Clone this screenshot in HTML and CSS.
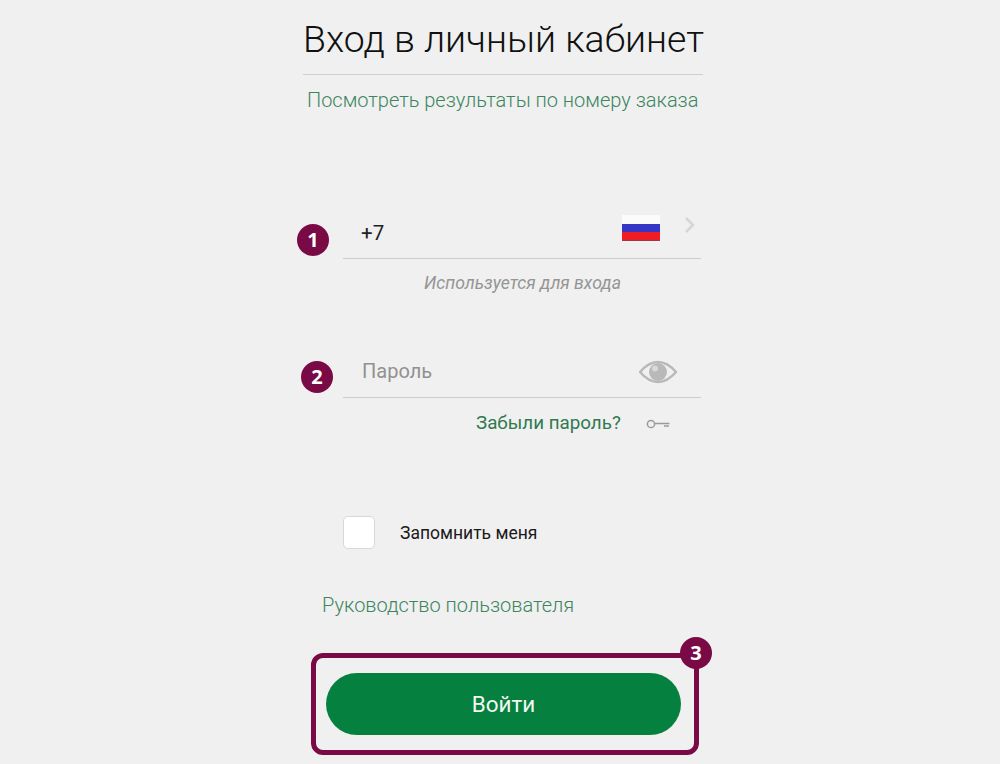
FILE: index.html
```html
<!DOCTYPE html>
<html lang="ru">
<head>
  <meta charset="UTF-8" />
  <title>Вход в личный кабинет</title>
  <link rel="stylesheet" href="styles.css">
</head>
<body>
  <div class="container">
    <h1 class="title">Вход в личный кабинет</h1>
    <a class="link order-link" href="#">Посмотреть результаты по номеру заказа</a>

    <div class="field phone-field">
      <span class="badge badge-one">1</span>
      <span class="value">+7</span>
      <svg class="flag" width="40" height="26" viewBox="0 0 40 26">
        <rect x="1" y="0" width="38" height="9" fill="#fbfbfb"/>
        <rect x="1" y="9" width="38" height="8" fill="#3636c4"/>
        <rect x="1" y="17" width="38" height="8" fill="#ee1c25"/>
        <rect x="1" y="25" width="38" height="1" fill="#a03a40"/>
      </svg>
      <svg class="chevron" width="12" height="18" viewBox="0 0 12 18">
        <path d="M2 2l7 7-7 7" fill="none" stroke="#d6d6d6" stroke-width="2.6"/>
      </svg>
    </div>
    <p class="hint">Используется для входа</p>

    <div class="field password-field">
      <span class="badge badge-two">2</span>
      <span class="placeholder">Пароль</span>
      <svg class="eye" width="38" height="24" viewBox="0 0 38 24">
        <path d="M1 12C7 5 13 2 19 2s12 3 18 10c-6 7-12 10-18 10S7 19 1 12z" fill="none" stroke="#b9b9b9" stroke-width="2.4"/>
        <circle cx="19" cy="12" r="9" fill="#b9b9b9"/>
        <circle cx="16" cy="8.5" r="3" fill="#d8d8d8"/>
      </svg>
    </div>
    <div class="forgot">
      <a class="forgot-link" href="#">Забыли пароль?</a>
      <svg class="key" width="24" height="10" viewBox="0 0 24 10">
        <circle cx="5" cy="5" r="3.6" fill="none" stroke="#9a9a9a" stroke-width="1.5"/>
        <path d="M9 4.600h14.500M18 7h5" fill="none" stroke="#9a9a9a" stroke-width="1.500"/>
      </svg>
    </div>

    <label class="remember">
      <span class="checkbox"></span>
      <span>Запомнить меня</span>
    </label>

    <a class="link guide-link" href="#">Руководство пользователя</a>

    <div class="submit-wrap">
      <button class="submit">Войти</button>
      <span class="frame"></span>
      <span class="badge badge-three">3</span>
    </div>
  </div>
</body>
</html>
```

FILE: styles.css
```css
html, body {
  height: 100%;
}
body {
  margin: 0;
  background: #f0f0f0;
  font-family: Roboto, "Liberation Sans", sans-serif;
  overflow: hidden;
}
.container {
  width: 400px;
  margin-left: 303px;
  display: flex;
  flex-direction: column;
}
.title {
  margin: 0;
  height: 74px;
  border-bottom: 1px solid #cfcfcf;
  font-size: 37.4px;
  font-weight: 300;
  line-height: 78px;
  color: #111;
  white-space: nowrap;
}
.link {
  color: #3c8560;
  text-decoration: none;
  font-size: 20px;
  font-weight: 300;
  white-space: nowrap;
}
.order-link {
  margin: 14px 0 0 4px;
  line-height: 22px;
}
.field {
  position: relative;
  display: flex;
  align-items: center;
  width: 340px;
  margin-left: 40px;
  padding-left: 18px;
  border-bottom: 1px solid #cccccc;
}
.phone-field {
  height: 52px;
  margin-top: 95px;
  color: #222;
  font-size: 20.5px;
}
.value {
  margin-top: 1px;
}
.flag {
  position: absolute;
  left: 278px;
  top: 9px;
  filter: blur(0.5px);
}
.chevron {
  position: absolute;
  left: 341px;
  top: 10px;
}
.hint {
  margin: 14px 0 0 121px;
  font-size: 17.7px;
  font-style: italic;
  font-weight: 400;
  line-height: 20px;
  color: #959595;
}
.password-field {
  height: 52px;
  margin-top: 52px;
  color: #919191;
  font-size: 20px;
}
.placeholder {
  margin: -1px 0 0 1px;
}
.eye {
  position: absolute;
  left: 296px;
  top: 15px;
}
.forgot {
  display: flex;
  align-items: center;
  margin: 14px 0 0 173px;
  height: 22px;
}
.forgot-link {
  color: #2f7a4f;
  font-size: 18.8px;
  text-decoration: none;
}
.key {
  margin: 2px 0 0 25px;
}
.remember {
  display: flex;
  align-items: center;
  margin: 82px 0 0 40px;
  font-size: 17.5px;
  color: #1a1a1a;
}
.checkbox {
  width: 30px;
  height: 31px;
  margin-right: 25px;
  background: #fff;
  border: 1px solid #d8d8d8;
  border-radius: 5px;
}
.guide-link {
  margin: 45px 0 0 19px;
  line-height: 22px;
}
.submit-wrap {
  position: relative;
  margin: 57px 0 0 23px;
  width: 355px;
}
.submit {
  display: block;
  width: 355px;
  height: 62px;
  border: none;
  border-radius: 31px;
  background: #05803e;
  color: #f2f7f2;
  font-family: inherit;
  font-size: 22.5px;
  font-weight: 400;
}
.frame {
  position: absolute;
  left: -15px;
  top: -20px;
  width: 378px;
  height: 92px;
  border: 5px solid #7a0a45;
  border-radius: 12px;
}
.badge {
  position: absolute;
  width: 32px;
  height: 32px;
  border-radius: 50%;
  background: #7a0a45;
  color: #fff;
  font-family: "Open Sans", sans-serif;
  font-size: 20px;
  font-weight: 700;
  line-height: 32px;
  text-align: center;
}
.badge-one {
  left: -46px;
  top: 18px;
}
.badge-two {
  left: -42px;
  top: 16px;
}
.badge-three {
  left: 354px;
  top: -36px;
}
```
